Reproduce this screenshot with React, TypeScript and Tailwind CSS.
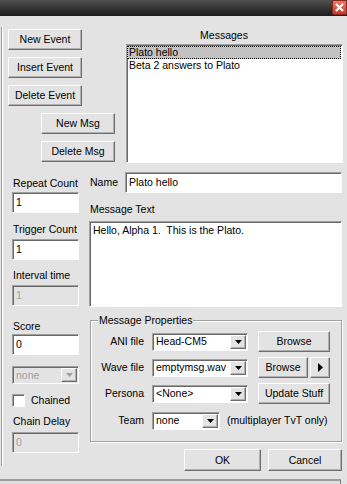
import React from "react";

const raised =
  "bg-[#e3e3e3] border border-t-white border-l-white border-r-[#6f6f6f] border-b-[#6f6f6f] shadow-[inset_-1px_-1px_0_#b0b0b0]";
const sunken =
  "border border-t-[#a0a0a0] border-l-[#a0a0a0] border-r-white border-b-white shadow-[inset_1px_1px_0_#696969]";

function Btn({ children, className = "" }: { children?: React.ReactNode; className?: string }) {
  return (
    <div className={`flex items-center justify-center shrink-0 ${raised} ${className}`}>{children}</div>
  );
}

function Field({
  children,
  disabled = false,
  className = "",
}: {
  children?: React.ReactNode;
  disabled?: boolean;
  className?: string;
}) {
  return (
    <div
      className={`h-[21px] flex items-center pl-[3px] shrink-0 ${sunken} ${
        disabled ? "bg-[#e3e3e3] text-[#a0a0a0]" : "bg-white"
      } ${className}`}
    >
      {children}
    </div>
  );
}

function Arrow({ grey = false }: { grey?: boolean }) {
  return (
    <svg width="7" height="4" viewBox="0 0 7 4">
      <path d="M0 0H7L3.5 4Z" fill={grey ? "#a0a0a0" : "#000"} />
    </svg>
  );
}

function Combo({
  value,
  disabled = false,
  className = "",
}: {
  value: string;
  disabled?: boolean;
  className?: string;
}) {
  return (
    <div
      className={`h-[18px] flex items-stretch shrink-0 ${sunken} ${
        disabled ? "bg-[#e3e3e3] text-[#a0a0a0]" : "bg-white"
      } ${className}`}
    >
      <div className="flex-1 flex items-center pl-[3px] whitespace-nowrap overflow-hidden">{value}</div>
      <div className={`w-[16px] m-[1px] flex items-center justify-center ${raised}`}>
        <Arrow grey={disabled} />
      </div>
    </div>
  );
}

export default function App() {
  return (
    <div className="w-[347px] h-[484px] overflow-hidden bg-[#e3e3e3] flex flex-col text-[10.5px] leading-[13px] text-black font-['Liberation_Sans',Arial,sans-serif]">
      {/* title bar */}
      <div className="h-[16px] shrink-0 flex justify-end bg-gradient-to-b from-[#505050] to-[#1c1c1c]">
        <div className="w-[15px] h-[15px] rounded-bl-[2px] border border-[#8a2a1c] bg-gradient-to-b from-[#ec7a62] to-[#c5392a] flex items-center justify-center">
          <svg width="9" height="9" viewBox="0 0 9 9">
            <path d="M1 1L8 8M8 1L1 8" stroke="white" strokeWidth="2.2" />
          </svg>
        </div>
      </div>

      {/* main */}
      <div className="h-[463px] shrink-0 flex">
        <div className="w-[4px] shrink-0">
          <div className="ml-[1px] mt-[11px] h-[439px] w-[2px] border-l border-l-[#a0a0a0] border-r border-r-white" />
        </div>

        <div className="flex-1 flex flex-col">
          {/* top section */}
          <div className="flex h-[147px] shrink-0">
            <div className="ml-[4px] w-[107px] pt-[13px] flex flex-col gap-[7px]">
              <Btn className="w-[74px] h-[21px]">New Event</Btn>
              <Btn className="w-[74px] h-[21px]">Insert Event</Btn>
              <Btn className="w-[74px] h-[21px]">Delete Event</Btn>
              <Btn className="w-[74px] h-[21px] ml-[33px]">New Msg</Btn>
              <Btn className="w-[74px] h-[21px] ml-[33px]">Delete Msg</Btn>
            </div>
            <div className="ml-[11px] w-[217px] pt-[13px] flex flex-col">
              <div className="h-[13px] text-center pr-[21px]">Messages</div>
              <div className={`mt-[2px] h-[119px] bg-white pt-[1px] ${sunken}`}>
                <div className="h-[13px] mr-[1px] bg-[#c2c2c2] border border-dotted border-black flex items-center pl-[1px]">
                  Plato hello
                </div>
                <div className="h-[13px] flex items-center pl-[2px]">Beta 2 answers to Plato</div>
              </div>
            </div>
          </div>

          {/* lower section */}
          <div className="flex flex-1">
            {/* left column */}
            <div className="ml-[8px] w-[67px] flex flex-col">
              <div className="mt-[14px] h-[13px] pl-[1px] whitespace-nowrap">Repeat Count</div>
              <Field className="mt-[2px]">1</Field>
              <div className="mt-[10px] h-[13px] pl-[1px] whitespace-nowrap">Trigger Count</div>
              <Field className="mt-[3px]">1</Field>
              <div className="mt-[9px] h-[13px] pl-[1px] whitespace-nowrap">Interval time</div>
              <Field className="mt-[3px]" disabled>
                1
              </Field>
              <div className="mt-[14px] h-[13px] pl-[1px]">Score</div>
              <Field className="mt-[1px]">0</Field>
              <Combo className="mt-[11px]" value="none" disabled />
              <div className="mt-[10px] h-[13px] flex items-center">
                <div className={`w-[13px] h-[13px] bg-white ${sunken}`} />
                <span className="ml-[6px]">Chained</span>
              </div>
              <div className="mt-[8px] h-[13px] pl-[1px] whitespace-nowrap">Chain Delay</div>
              <Field className="mt-[4px]" disabled>
                0
              </Field>
            </div>

            {/* right column */}
            <div className="ml-[10px] w-[254px] flex flex-col">
              <div className="mt-[9px] h-[21px] flex items-center">
                <div className="w-[36px] pl-[1px]">Name</div>
                <Field className="w-[217px]">Plato hello</Field>
              </div>
              <div className="mt-[10px] h-[13px] pl-[1px]">Message Text</div>
              <div className={`mt-[5px] h-[86px] w-[253px] bg-white pl-[3px] pt-[2px] whitespace-pre ${sunken}`}>
                {"Hello, Alpha 1.  This is the Plato."}
              </div>

              {/* group box */}
              <div className="relative mt-[13px] ml-[1px] w-[252px] h-[122px] border border-[#a0a0a0] shadow-[inset_1px_1px_0_#fff,1px_1px_0_#fff] pt-[10px] flex flex-col gap-[5px]">
                <div className="absolute -top-[7px] left-[7px] px-[1px] bg-[#e3e3e3] h-[13px]">
                  Message Properties
                </div>
                <div className="h-[21px] flex items-center">
                  <div className="w-[53px] text-right">ANI file</div>
                  <Combo className="ml-[8px] w-[96px]" value="Head-CM5" />
                  <Btn className="ml-[10px] w-[72px] h-[21px]">Browse</Btn>
                </div>
                <div className="h-[21px] flex items-center">
                  <div className="w-[53px] text-right">Wave file</div>
                  <Combo className="ml-[8px] w-[96px]" value="emptymsg.wav" />
                  <Btn className="ml-[10px] w-[50px] h-[21px]">Browse</Btn>
                  <Btn className="ml-[2px] w-[20px] h-[21px]">
                    <svg width="5" height="9" viewBox="0 0 5 9">
                      <path d="M0 0L5 4.5L0 9Z" fill="#000" />
                    </svg>
                  </Btn>
                </div>
                <div className="h-[21px] flex items-center">
                  <div className="w-[53px] text-right">Persona</div>
                  <Combo className="ml-[8px] w-[96px]" value="<None>" />
                  <Btn className="ml-[10px] w-[72px] h-[21px]">Update Stuff</Btn>
                </div>
                <div className="h-[21px] flex items-center mt-[1px]">
                  <div className="w-[53px] text-right">Team</div>
                  <Combo className="ml-[8px] w-[68px]" value="none" />
                  <div className="ml-[7px] whitespace-nowrap">(multiplayer TvT only)</div>
                </div>
              </div>

              <div className="mt-[7px] flex justify-end pr-[1px] gap-[7px]">
                <Btn className="w-[77px] h-[22px]">OK</Btn>
                <Btn className="w-[74px] h-[22px]">Cancel</Btn>
              </div>
            </div>
          </div>
        </div>
      </div>

      {/* bottom strip */}
      <div className="flex-1 flex">
        <div className="w-[341px] border-t-2 border-t-[#9c9c9c] border-r border-r-[#808080] bg-[#dedede]" />
      </div>
    </div>
  );
}
